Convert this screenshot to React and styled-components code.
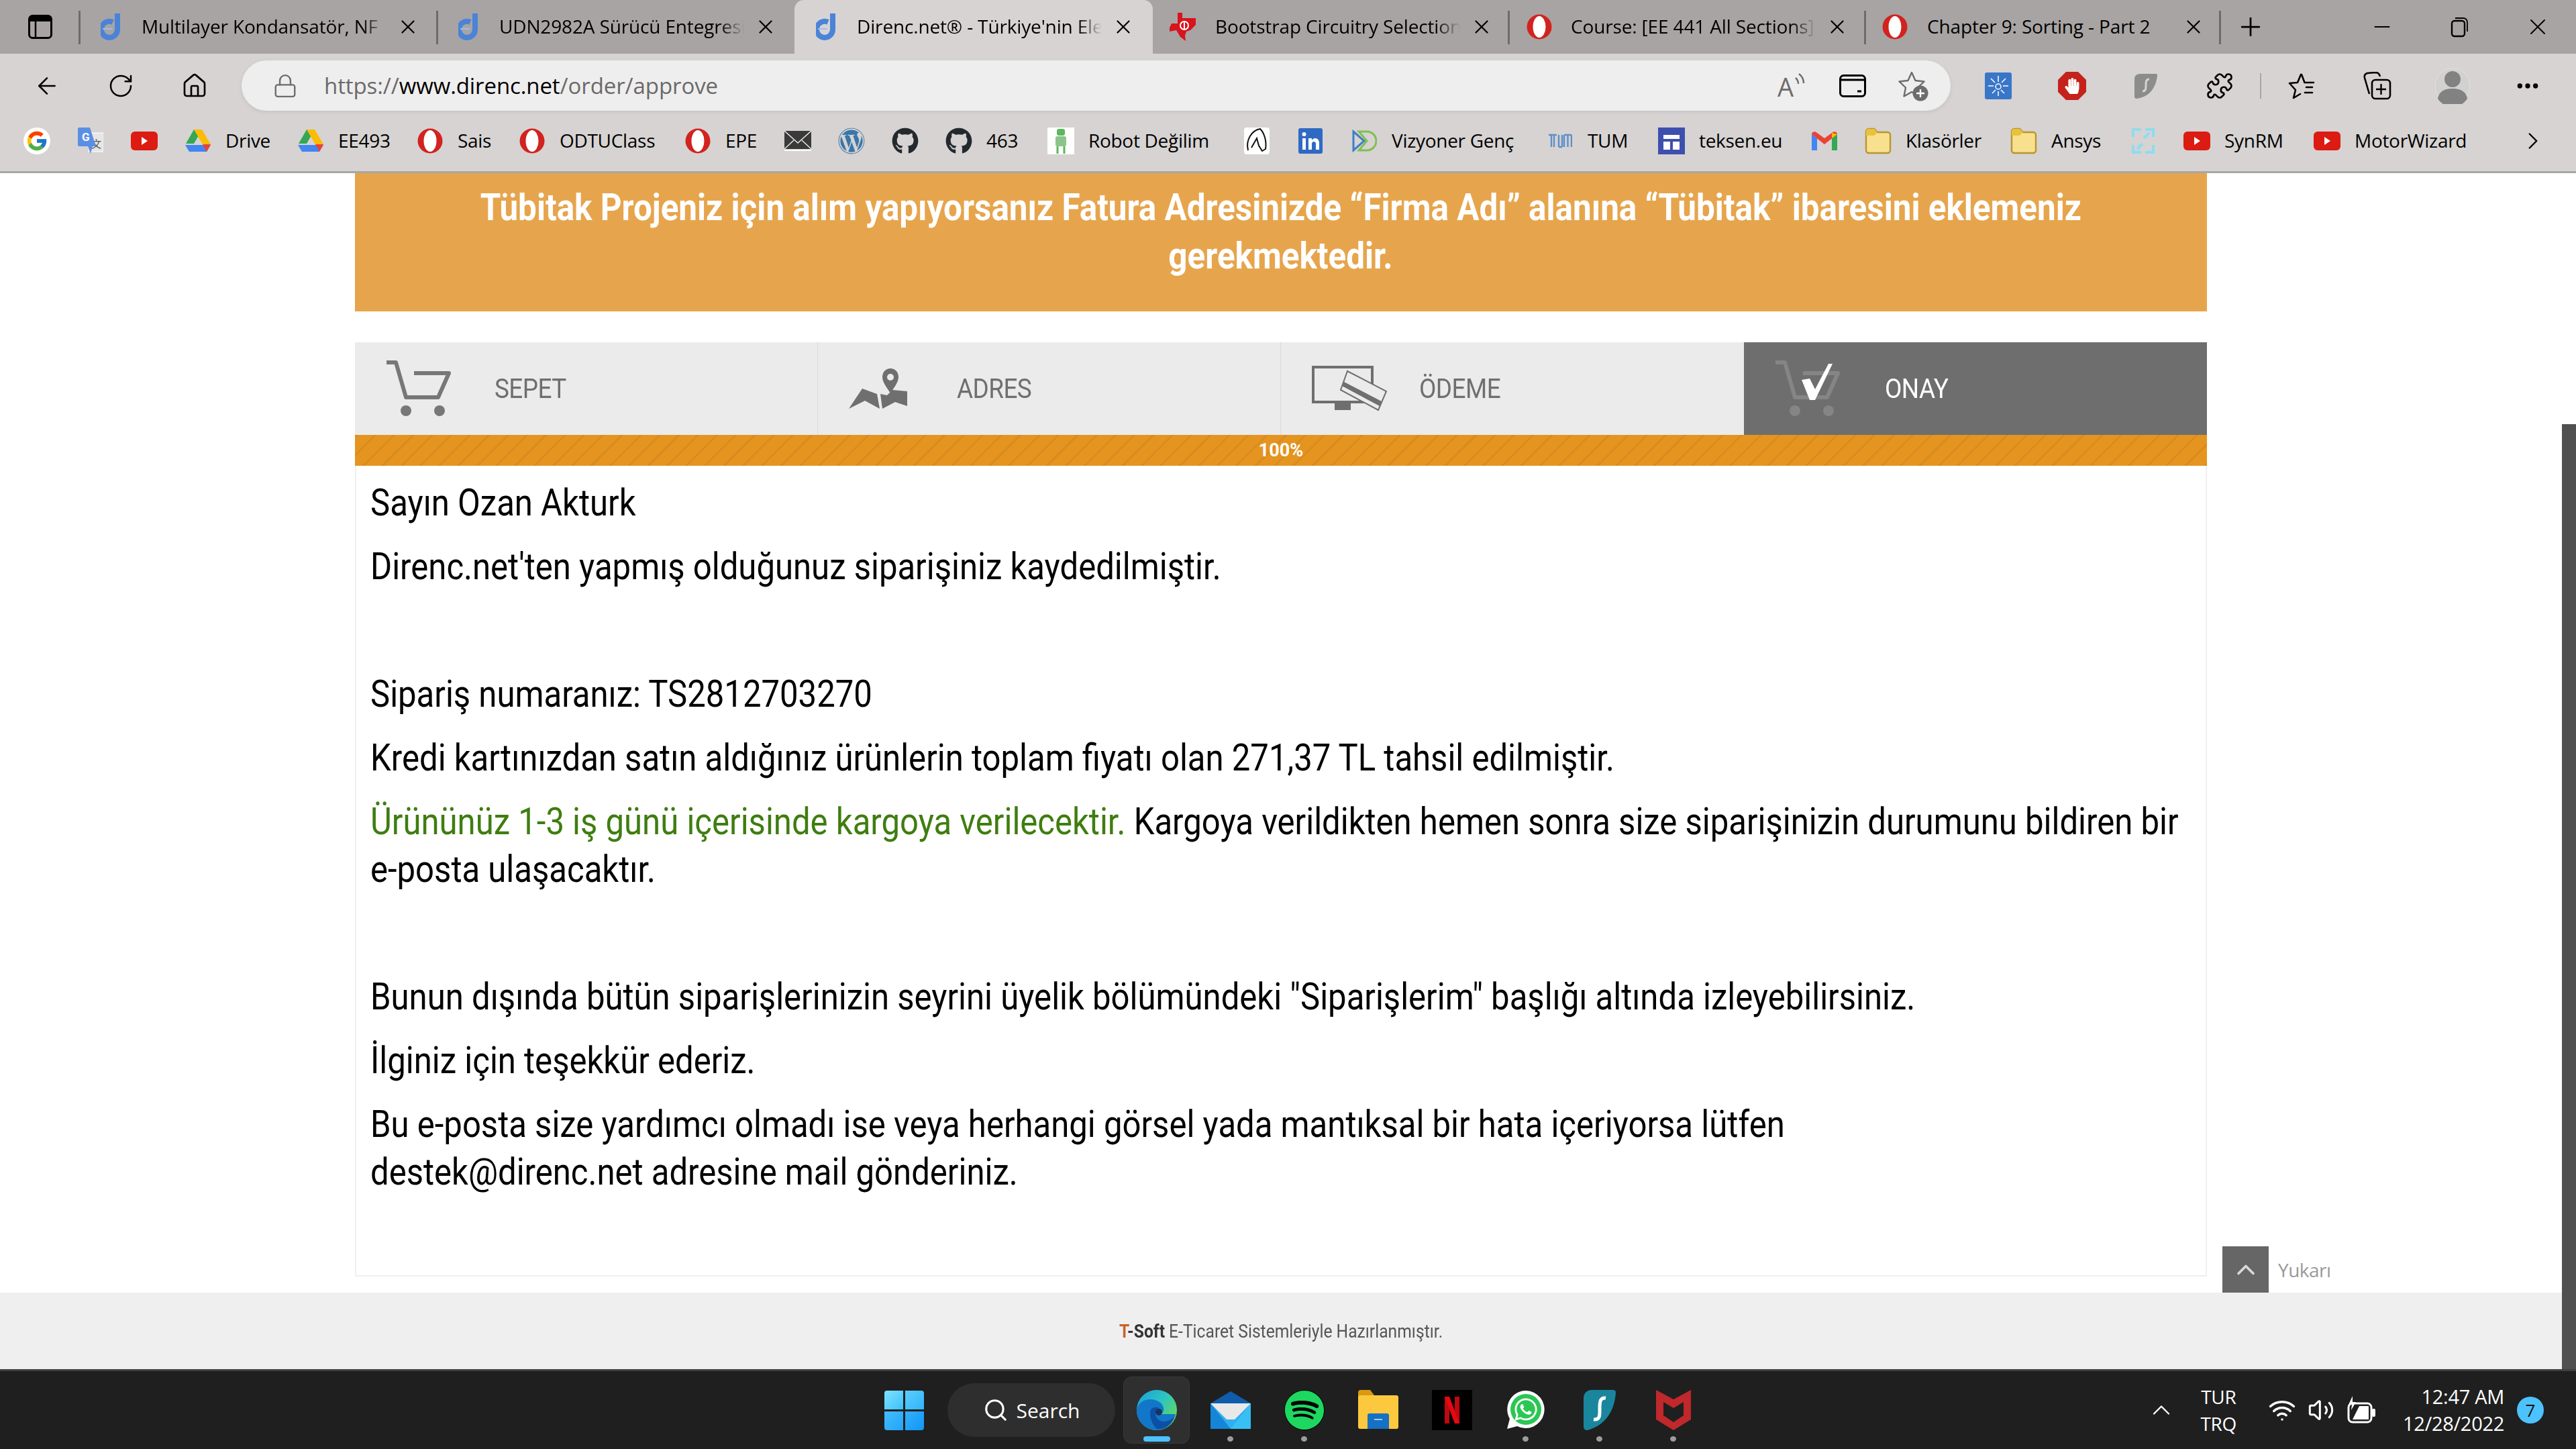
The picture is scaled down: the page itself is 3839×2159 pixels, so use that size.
import React from 'react';
import styled, { createGlobalStyle } from 'styled-components';
import { ArrowLeft, RotateCw, House, Lock, Plus, X, Minus, ChevronRight, ChevronUp, Puzzle, Wifi, Ellipsis, Search, Volume2 } from 'lucide-react';
import { FaGithub, FaWhatsapp, FaSpotify, FaWordpress, FaHandPaper } from 'react-icons/fa';
import { FcGoogle } from 'react-icons/fc';

const Global = createGlobalStyle`
  html, body { margin: 0; padding: 0; background: #fff; }
  * { box-sizing: border-box; }
`;

const UI = `"Open Sans", "Liberation Sans", sans-serif`;
const WEB = `Roboto, "Liberation Sans", sans-serif`;

const Screen = styled.div`
  width: 3839px; height: 2159px; display: flex; flex-direction: column; overflow: hidden;
  font-family: ${UI}; background: #fff;
`;

/* ---------- tab strip ---------- */
const TabStrip = styled.div`
  height: 80px; flex: none; background: #a8a4a3; display: flex; align-items: center; color: #000;
`;
const SideSlot = styled.div`
  width: 118px; flex: none; height: 100%; display: flex; align-items: center; padding-left: 42px;
`;
const Tab = styled.div`
  position: relative; width: ${p => p.$w}px; height: 80px; flex: none; display: flex; align-items: center;
  background: ${p => (p.$active ? '#d6d3d2' : 'transparent')};
  border-radius: ${p => (p.$active ? '14px 14px 0 0' : '0')};
  &::before {
    content: ''; display: ${p => (p.$divider ? 'block' : 'none')}; position: absolute; left: -1px; top: 16px;
    width: 3px; height: 50px; background: #6e6b6a;
  }
`;
const FavSlot = styled.div`
  width: 93px; flex: none; display: flex; align-items: center; height: 40px; padding-left: ${p => p.$pad}px;
`;
const TabTitle = styled.div`
  width: 365px; flex: none; font-size: 28px; letter-spacing: -0.15px; white-space: nowrap; overflow: hidden; line-height: 40px;
  margin-top: -2px;
  ${p => p.$fade && `mask-image: linear-gradient(to right, #000 90%, transparent 100%); -webkit-mask-image: linear-gradient(to right, #000 90%, transparent 100%);`}
`;
const CloseSlot = styled.div`
  width: 64px; flex: none; display: flex; justify-content: center; align-items: center;
`;
const PlusSlot = styled.div`
  position: relative; margin-left: 23px; width: 44px; height: 80px; display: flex; align-items: center; flex: none;
  &::before { content: ''; position: absolute; left: -25px; top: 16px; width: 3px; height: 50px; background: #6e6b6a; }
`;
const WinControls = styled.div`
  margin-left: auto; display: flex; gap: 76px; padding-right: 37px; align-items: center;
`;
const WinBtn = styled.div`
  width: 40px; display: flex; justify-content: center; align-items: center;
`;

/* ---------- toolbar ---------- */
const Toolbar = styled.div`
  height: 95px; flex: none; background: #d6d3d2; display: flex; align-items: center;
`;
const NavGroup = styled.div`
  display: flex; gap: 70px; padding-left: 50px; flex: none;
`;
const NavBtn = styled.div`
  width: 40px; height: 40px; display: flex; align-items: center; justify-content: center; color: #000;
`;
const AddressBar = styled.div`
  margin-left: 50px; width: 2547px; height: 75px; flex: none; border-radius: 38px; background: #efeeee;
  box-shadow: 0 2px 6px rgba(0,0,0,.08); display: flex; align-items: center; padding: 0 32px 0 45px;
`;
const Url = styled.div`
  margin-left: 38px; font-size: 33px; color: #6a6a6a; letter-spacing: -0.1px; white-space: nowrap;
`;
const UrlHost = styled.span` color: #000; `;
const BarIcons = styled.div`
  margin-left: auto; display: flex; gap: 48px; align-items: center;
`;
const ExtGroup = styled.div`
  margin-left: 16px; display: flex; align-items: center; flex: none;
`;
const ExtSlot = styled.div`
  width: ${p => p.$w}px; height: 60px; display: flex; align-items: center; justify-content: center; color: #000;
`;
const Sep = styled.div`
  width: 2px; height: 38px; background: #a9a6a5; margin: 0 5px;
`;

/* ---------- bookmarks ---------- */
const Bookmarks = styled.div`
  height: 83px; flex: none; background: #d6d3d2; border-bottom: 3px solid #a8a6a6; padding: 0 43px 10px 15px;
  display: flex; align-items: center;
`;
const BookItem = styled.div`
  display: flex; align-items: center; gap: 21px; padding: 0 20px; flex: none;
`;
const BookIcon = styled.div`
  width: 40px; height: 40px; flex: none; display: flex; align-items: center; justify-content: center;
`;
const BookLabel = styled.div`
  width: ${p => p.$w}px; font-size: 28px; letter-spacing: -0.3px; white-space: nowrap; color: #000; margin-top: -2px;
`;
const BookEnd = styled.div`
  margin-left: auto; display: flex;
`;
const GoogleMark = styled(FcGoogle)`
  background: #fff; border-radius: 50%; padding: 3px;
`;

/* ---------- page ---------- */
const Viewport = styled.div`
  flex: 1; min-height: 0; display: flex; position: relative;
`;
const Page = styled.div`
  flex: 1; min-width: 0; display: flex; flex-direction: column; position: relative;
`;
const Content = styled.div`
  flex: 1; width: 2760px; margin: 0 auto; font-family: ${WEB};
`;
const Banner = styled.div`
  height: 206px; background: #e6a54d; padding-top: 15px; text-align: center; color: #fff;
  font-size: 56px; font-weight: 700; line-height: 72px; overflow: hidden;
`;
const Squeeze = styled.span`
  display: inline-block; white-space: nowrap; transform: scaleX(${p => p.$k}); transform-origin: center;
`;
const Stepper = styled.div`
  margin-top: 46px; display: grid; grid-template-columns: repeat(4, 1fr); height: 138px;
`;
const Step = styled.div`
  display: flex; align-items: center; background: ${p => (p.$active ? '#6e6e6e' : '#ebebeb')};
  color: ${p => (p.$active ? '#fff' : '#6f6f6f')};
  border-right: 1px solid ${p => (p.$plain ? 'transparent' : '#dadada')};
  padding-left: 46px;
`;
const StepIcon = styled.div`
  width: ${p => p.$slot}px; flex: none; display: flex; align-items: center;
`;
const StepLabel = styled.div`
  font-size: 41px; letter-spacing: -0.6px; transform: scaleX(0.9); transform-origin: left center;
`;
const Progress = styled.div`
  height: 46px; display: flex; align-items: center; justify-content: center; color: #fff;
  font-size: 27px; font-weight: 700;
  background-color: #e5951f;
  background-image: repeating-linear-gradient(135deg, #d98c1f 0 3px, transparent 3px 20px);
`;
const Panel = styled.div`
  height: 1208px; border: 2px solid #efefef; border-top: 0; padding: 20px 21px 0;
  color: #000; font-size: 56px; line-height: 71px;
`;
const Para = styled.div`
  width: calc(100% / 0.876); transform: scaleX(0.876); transform-origin: left top; margin-bottom: 24px;
  min-height: 71px;
`;
const Green = styled.span` color: #3f7d10; `;

const ToTop = styled.div`
  position: absolute; left: 3312px; top: 1599px; display: flex; align-items: center; gap: 14px;
`;
const ToTopBtn = styled.div`
  width: 69px; height: 69px; background: #666; display: flex; align-items: center; justify-content: center; color: #d8d8d8;
`;
const ToTopText = styled.div`
  font-family: ${UI}; font-size: 28px; letter-spacing: -0.5px; color: #9a9a9a;
`;
const Footer = styled.div`
  height: 114px; flex: none; background: #efefef; display: flex; align-items: center; justify-content: center;
  font-family: ${WEB}; font-size: 28px; color: #555;
`;
const FootT = styled.b` color: #c8622a; `;
const FootSoft = styled.b` color: #333; `;
const ScrollTrack = styled.div`
  width: 21px; flex: none; background: #fff; padding-top: 374px; display: flex;
`;
const ScrollThumb = styled.div`
  flex: 1; background: #505050;
`;

/* ---------- taskbar ---------- */
const Taskbar = styled.div`
  height: 119px; flex: none; background: #1f1f1f; border-top: 3px solid #404040; display: flex; align-items: center;
  color: #fff; padding-left: 1318px;
`;
const StartIcon = styled.div`
  width: 59px; height: 59px; flex: none; display: grid; grid-template-columns: 1fr 1fr; gap: 3px;
`;
const Pane = styled.div`
  background: ${p => p.$bg}; border-radius: ${p => p.$r};
`;
const SearchPill = styled.div`
  margin-left: 35px; width: 250px; height: 80px; border-radius: 40px; background: #2e2e2e; flex: none;
  display: flex; align-items: center; justify-content: center; gap: 12px; font-size: 30px;
`;
const ActiveTile = styled.div`
  position: relative; margin-left: 12px; width: 99px; height: 100px; border-radius: 12px; background: #2f2f2f; flex: none;
  display: flex; align-items: center; justify-content: center; border: 1px solid #383838;
  &::after { content: ''; position: absolute; left: 29px; bottom: 2px; width: 40px; height: 8px; border-radius: 4px; background: #4cc2ff; }
`;
const TaskSlot = styled.div`
  position: relative; width: 110px; height: 100px; flex: none; display: flex; align-items: center; justify-content: center;
  &::after {
    content: ''; display: ${p => (p.$dot ? 'block' : 'none')}; position: absolute; left: 50px; bottom: 3px; width: 9px; height: 8px;
    border-radius: 50%; background: #9c9c9c;
  }
`;
const TaskApps = styled.div`
  display: flex; margin-left: 6px;
`;
const SpotifyMark = styled(FaSpotify)`
  background: #000; border-radius: 50%;
`;
const Tray = styled.div`
  margin-left: auto; display: flex; align-items: center; flex: none; padding-right: 48px;
`;
const TrayCol = styled.div`
  display: flex; flex-direction: column; text-align: ${p => p.$align}; font-size: ${p => p.$size}px; line-height: 40px; letter-spacing: -0.3px;
  margin-left: ${p => p.$ml}px;
`;
const TrayIcon = styled.div`
  display: flex; align-items: center; justify-content: center; width: 50px; margin-left: ${p => p.$ml}px;
`;
const Badge = styled.div`
  margin-left: 19px; width: 40px; height: 40px; border-radius: 50%; background: #4cc2ff; color: #111; font-size: 26px;
  display: flex; align-items: center; justify-content: center;
`;

/* ---------- drawn icons ---------- */
const DirencIcon = () => (
  <svg width="32" height="42" viewBox="0 0 32 42">
    <path d="M25 1v24a12 12 0 1 1-7-11" fill="none" stroke="#4a83d8" strokeWidth="8" />
    <path d="M3 24h14" stroke="#9dbdea" strokeWidth="2" />
  </svg>
);
const OperaIcon = ({ s = 38 }) => (
  <svg width={s} height={s} viewBox="0 0 38 38">
    <circle cx="19" cy="19" r="18.5" fill="#d2231f" />
    <ellipse cx="19" cy="19" rx="9.500" ry="16" fill="#fff" />
  </svg>
);
const TIIcon = () => (
  <svg width="40" height="42" viewBox="0 0 40 42">
    <path d="M12 0h7v8h20v10l-8 8-6 2-2 6 1 8-8-6-6-10-10 2v-6l3-6h9z" fill="#d8141d" />
    <circle cx="22" cy="19" r="6" fill="none" stroke="#fff" strokeWidth="2" />
    <path d="M22 12v14" stroke="#fff" strokeWidth="2" />
  </svg>
);
const SidebarIcon = () => (
  <svg width="36" height="36" viewBox="0 0 36 36">
    <rect x="1.5" y="1.5" width="33" height="33" rx="5" fill="none" stroke="#000" strokeWidth="3" />
    <path d="M2 10V6a4 4 0 0 1 4-4h24a4 4 0 0 1 4 4v4z" fill="#000" />
    <path d="M11 10v24" stroke="#000" strokeWidth="2.5" />
  </svg>
);
const RestoreIcon = () => (
  <svg width="28" height="32" viewBox="0 0 28 32">
    <rect x="2" y="7" width="19" height="23" rx="4" fill="none" stroke="#000" strokeWidth="2.4" />
    <path d="M7 3h12a6 6 0 0 1 6 6v14" fill="none" stroke="#000" strokeWidth="1.8" />
  </svg>
);
const ReadAloudSvg = styled.svg` overflow: visible; `;
const ReadAloud = () => (
  <ReadAloudSvg width="44" height="44" viewBox="0 0 44 44">
    <text x="0" y="38" fontFamily="Open Sans" fontSize="38" fill="#6c6c6c">A</text>
    <path d="M27 10a12 12 0 0 1 4 9M32 4a18 18 0 0 1 7 14" fill="none" stroke="#6c6c6c" strokeWidth="2.4" />
  </ReadAloudSvg>
);
const CardIcon = () => (
  <svg width="40" height="34" viewBox="0 0 40 34">
    <rect x="1.5" y="1.5" width="37" height="31" rx="5" fill="none" stroke="#000" strokeWidth="3" />
    <path d="M2 8h36" stroke="#000" strokeWidth="3" />
    <path d="M27 25h6" stroke="#000" strokeWidth="3" />
  </svg>
);
const StarPlus = () => (
  <svg width="46" height="46" viewBox="0 0 46 46">
    <path d="M20 3l5.5 12 13 1.5-9.5 9 2.5 13-11.5-6.5L8.500 38.500l2.500-13-9.500-9 13-1.500z" fill="none" stroke="#6c6c6c" strokeWidth="2.4" strokeLinejoin="round" />
    <circle cx="33" cy="34" r="11.500" fill="#6c6c6c" />
    <path d="M33 28v12M27 34h12" stroke="#fff" strokeWidth="2.400" />
  </svg>
);
const SunBox = () => (
  <svg width="40" height="40" viewBox="0 0 40 40">
    <rect width="40" height="40" rx="3" fill="#3a76c8" />
    <circle cx="20" cy="21" r="4" fill="none" stroke="#fff" strokeWidth="1.500" />
    <path d="M20 5v9M20 28v7M5 20h8M27 20h8M9 9l6 6M31 9l-6 6M11 31l5-5M29 31l-5-5" stroke="#fff" strokeWidth="1.500" />
  </svg>
);
const StopHand = () => (
  <svg width="42" height="42" viewBox="0 0 42 42">
    <path d="M12 0h18l12 12v18L30 42H12L0 30V12z" fill="#c4221a" />
    <foreignObject x="9" y="9" width="24" height="24"><FaHandPaper size={24} color="#fff" /></foreignObject>
  </svg>
);
const SharkGrey = () => (
  <svg width="34" height="38" viewBox="0 0 34 38">
    <path d="M8 1h24c2 0 2 1 2 3-2 14-8 30-30 34-3 0-4-1-4-3V8c0-4 4-7 8-7z" fill="#8c8c8c" />
    <path d="M22 9c-5 0-5 4-5 9s0 9-5 9" fill="none" stroke="#d6d3d2" strokeWidth="3" />
  </svg>
);
const FavList = () => (
  <svg width="42" height="40" viewBox="0 0 42 40">
    <path d="M20 3l4.500 12H38M27 22H36M25 30H36M19 3L14 15 2 16l9 10-3 12 10-6" fill="none" stroke="#000" strokeWidth="2.600" strokeLinejoin="round" strokeLinecap="round" />
  </svg>
);
const Collections = () => (
  <svg width="42" height="42" viewBox="0 0 42 42">
    <path d="M9 33L2 9c-1-4 1-6 4-7l12-1c4 0 6 2 7 6" fill="none" stroke="#000" strokeWidth="2.600" />
    <rect x="13" y="12" width="27" height="28" rx="5" fill="none" stroke="#000" strokeWidth="2.600" />
    <path d="M26.500 18v16M19 26h15" stroke="#000" strokeWidth="2.400" />
  </svg>
);
const Profile = () => (
  <svg width="54" height="54" viewBox="0 0 54 54">
    <circle cx="27" cy="27" r="26" fill="#d3d1d0" stroke="#e3e1e0" strokeWidth="1" />
    <circle cx="27" cy="17" r="12" fill="#828282" />
    <path d="M5 46c2-12 12-15 22-15s20 3 22 15a26 26 0 0 1-44 0z" fill="#828282" />
  </svg>
);
const YouTube = () => (
  <svg width="40" height="28" viewBox="0 0 40 28">
    <rect width="40" height="28" rx="6" fill="#dc1b12" />
    <path d="M16 8l9 6-9 6z" fill="#fff" />
  </svg>
);
const Translate = () => (
  <svg width="38" height="40" viewBox="0 0 38 40">
    <rect x="16" y="8" width="22" height="28" fill="#e6e6e6" stroke="#fff" />
    <text x="20" y="30" fontSize="15" fill="#555" fontFamily="Noto Sans CJK SC">文</text>
    <path d="M2 0h16l9 28H22l-3 11-4-11H2a2 2 0 0 1-2-2V2a2 2 0 0 1 2-2z" fill="#5b8fe6" />
    <text x="6" y="20" fontSize="17" fill="#fff" fontWeight="700" fontFamily="Roboto">G</text>
  </svg>
);
const Drive = () => (
  <svg width="38" height="34" viewBox="0 0 38 34">
    <path d="M13 0h12L13 21H1z" fill="#34a853" />
    <path d="M25 0l13 22H26L13 0z" fill="#fbbc04" />
    <path d="M6 33L0 23h38l-6 10z" fill="#4285f4" />
    <path d="M26 22h12l-6 11z" fill="#ea4335" />
  </svg>
);
const MailMono = () => (
  <svg width="40" height="30" viewBox="0 0 40 30">
    <rect width="40" height="27" fill="#3a3a3a" />
    <path d="M0 0l20 18L40 0M0 27l14-13M40 27L26 14" fill="none" stroke="#e8e8e8" strokeWidth="1.500" />
    <rect y="28" width="40" height="2" fill="#fff" />
  </svg>
);
const RobotIcon = () => (
  <svg width="40" height="40" viewBox="0 0 40 40">
    <rect width="40" height="40" fill="#fff" />
    <rect x="14" y="2" width="12" height="10" rx="3" fill="#5cb85c" />
    <rect x="12" y="13" width="16" height="15" rx="3" fill="#8cc48c" />
    <path d="M15 28v11M25 28v11" stroke="#5cb85c" strokeWidth="3" />
  </svg>
);
const HorseIcon = () => (
  <svg width="38" height="40" viewBox="0 0 38 40">
    <rect width="38" height="40" rx="4" fill="#fff" />
    <path d="M6 34C2 18 12 4 24 2c6 6 10 18 8 30l-5 3-5-8-3-11-8 14" fill="none" stroke="#111" strokeWidth="2" />
  </svg>
);
const LinkedIn = () => (
  <svg width="36" height="38" viewBox="0 0 36 38">
    <rect width="36" height="38" rx="3" fill="#2e6ac2" />
    <rect x="6" y="15" width="5" height="17" fill="#fff" />
    <circle cx="8.500" cy="9" r="3" fill="#fff" />
    <path d="M15 15h5v3c3-5 11-4 11 4v10h-5v-9c0-4-6-4-6 0v9h-5z" fill="#fff" />
  </svg>
);
const Vizyoner = () => (
  <svg width="38" height="34" viewBox="0 0 38 34">
    <path d="M3 3l16 14L3 31z" fill="none" stroke="#3f7fc4" strokeWidth="3" />
    <path d="M11 3h12a14 14 0 0 1 0 28H11l12-14z" fill="none" stroke="#7fc04f" strokeWidth="3" />
  </svg>
);
const TumLogo = () => (
  <svg width="36" height="22" viewBox="0 0 36 22">
    <path d="M1 2h12M5 2v18M9 2v18M16 2v18M21 2v18M16 20h5M24 2h11M24 2v18M29.500 2v18M35 2v18" fill="none" stroke="#5e8fc8" strokeWidth="2.400" />
  </svg>
);
const Teksen = () => (
  <svg width="40" height="40" viewBox="0 0 40 40">
    <rect width="40" height="40" fill="#3f4fae" />
    <rect x="8" y="11" width="24" height="6" fill="#fff" />
    <rect x="8" y="21" width="10" height="12" fill="#fff" />
    <rect x="22" y="21" width="10" height="12" fill="#fff" />
  </svg>
);
const Gmail = () => (
  <svg width="38" height="28" viewBox="0 0 38 28">
    <path d="M0 4v24h8V10z" fill="#4285f4" />
    <path d="M30 10v18h8V4z" fill="#34a853" />
    <path d="M0 4l19 15L38 4c0-4-5-5-8-2L19 10 8 2C5-1 0 0 0 4z" fill="#ea4335" />
    <path d="M30 2l8 2v0l-8 6z" fill="#fbbc04" />
  </svg>
);
const Folder = () => (
  <svg width="40" height="40" viewBox="0 0 40 40">
    <path d="M2 6a4 4 0 0 1 4-4h8l5 5h15a4 4 0 0 1 4 4v23a4 4 0 0 1-4 4H6a4 4 0 0 1-4-4z" fill="#f8e08e" stroke="#b8962e" strokeWidth="2.400" />
    <path d="M2 12V6a4 4 0 0 1 4-4h8l5 5-5 5z" fill="#e8c23e" />
  </svg>
);
const CyanExpand = () => (
  <svg width="34" height="40" viewBox="0 0 34 40">
    <path d="M2 14V3h12M32 26v11H20M20 3h12v11M14 37H2V26M8 32l8-8M26 8l-8 8" fill="none" stroke="#8fdcf0" strokeWidth="4" />
  </svg>
);
const CartIcon = ({ c = '#777' }) => (
  <svg width="97" height="84" viewBox="0 0 97 84">
    <path d="M1 3h14l15 52h48l16-36H42" fill="none" stroke={c} strokeWidth="6" strokeLinejoin="round" />
    <circle cx="30" cy="75" r="8" fill={c} />
    <circle cx="80" cy="75" r="8" fill={c} />
  </svg>
);
const PinIcon = () => (
  <svg width="88" height="60" viewBox="0 0 88 60">
    <path d="M0 60l20-30 22 8 4 22-22-12z" fill="#6f6f6f" />
    <path d="M50 60l-3-22 10 2 8-8 22 2v22l-18-6z" fill="#6f6f6f" />
    <path d="M62 0a12 12 0 0 1 12 13c0 8-8 17-12 24-4-7-12-16-12-24A12 12 0 0 1 62 0z" fill="#6f6f6f" />
    <circle cx="62" cy="13" r="5" fill="#ebebeb" />
  </svg>
);
const PayIcon = () => (
  <svg width="112" height="68" viewBox="0 0 112 68">
    <rect x="2" y="2" width="88" height="52" fill="none" stroke="#6f6f6f" strokeWidth="4" />
    <rect x="34" y="54" width="24" height="12" fill="#6f6f6f" />
    <path d="M53 8l58 30-12 28-56-30z" fill="#ebebeb" stroke="#6f6f6f" strokeWidth="2" />
    <path d="M48 24l56 29-3 7-56-30z" fill="#6f6f6f" />
  </svg>
);
const ApproveWrap = styled.div`
  position: relative; width: 97px; height: 84px;
`;
const CheckOverlay = styled.svg`
  position: absolute; left: 38px; top: 5px;
`;
const ApproveIcon = () => (
  <ApproveWrap>
    <CartIcon c="#858585" />
    <CheckOverlay width="50" height="54" viewBox="0 0 50 54">
      <path d="M2 24l12-2 8 16L42 0h6L22 54h-8z" fill="#fff" />
    </CheckOverlay>
  </ApproveWrap>
);
const Edge = () => (
  <svg width="60" height="60" viewBox="0 0 60 60">
    <defs>
      <linearGradient id="eg" x1="0" y1="0" x2="1" y2=".7">
        <stop offset="0" stopColor="#1aa0e0" /><stop offset=".55" stopColor="#2cc5c0" /><stop offset="1" stopColor="#6ad85a" />
      </linearGradient>
    </defs>
    <circle cx="30" cy="30" r="30" fill="url(#eg)" />
    <path d="M0 30C2 14 22 10 34 18c8 6 8 15 2 18l22 0C54 52 42 60 30 60 12 60 0 46 0 30z" fill="#1277c8" />
    <path d="M20 34c0-8 8-10 14-7-6 1-8 7-4 15 6 8 18 6 26-2-4 12-16 20-26 18-6-6-10-14-10-24z" fill="#0d4fa5" />
    <circle cx="33" cy="33" r="5" fill="#17335c" />
  </svg>
);
const MailApp = () => (
  <svg width="60" height="56" viewBox="0 0 60 56">
    <path d="M0 18L30 0l30 18v2H0z" fill="#0f5cab" />
    <rect y="18" width="60" height="38" fill="#2fb0ee" />
    <path d="M0 18h60L36 42H24z" fill="#e8e8e8" />
    <path d="M0 56V18l30 38z" fill="#1585d8" />
    <path d="M60 56V18L30 56z" fill="#38c0f4" />
  </svg>
);
const FolderApp = () => (
  <svg width="60" height="60" viewBox="0 0 60 60">
    <path d="M0 4a4 4 0 0 1 4-4h14l6 8v4H0z" fill="#d99a10" />
    <rect y="8" width="60" height="50" rx="3" fill="#fcc93e" />
    <path d="M14 38a3 3 0 0 1 3-3h26a3 3 0 0 1 3 3v20H14z" fill="#1670c4" />
    <path d="M24 44h12" stroke="#9cd0f0" strokeWidth="2" />
  </svg>
);
const Netflix = () => (
  <svg width="60" height="60" viewBox="0 0 60 60">
    <rect width="60" height="60" fill="#000" />
    <path d="M19 10h7v40h-7zM34 10h7v40h-7z" fill="#c10710" />
    <path d="M19 10h7l15 40h-7z" fill="#e50914" />
  </svg>
);
const WhatsApp = () => (
  <svg width="60" height="60" viewBox="0 0 60 60">
    <path d="M30 1a28 28 0 0 0-24 42L2 58l15-4A28 28 0 1 0 30 1z" fill="#fff" />
    <circle cx="30" cy="29" r="23" fill="#2bc653" />
    <foreignObject x="11" y="10" width="38" height="38"><FaWhatsapp size={38} color="#fff" /></foreignObject>
  </svg>
);
const Surfshark = () => (
  <svg width="48" height="60" viewBox="0 0 48 60">
    <path d="M12 0h32c3 0 4 2 4 4-2 26-14 48-42 56-4 0-6-2-6-5V12C0 5 5 0 12 0z" fill="#1a869e" />
    <path d="M33 12c-9-1-9 7-9 16s1 17-9 16" fill="none" stroke="#fff" strokeWidth="5" />
  </svg>
);
const McAfee = () => (
  <svg width="52" height="60" viewBox="0 0 52 60">
    <path d="M0 0l26 14L52 0v44L26 60 0 44z" fill="#c0282b" />
    <path d="M11 18l15 9 15-9v20L26 48 11 38z" fill="#1f1f1f" />
  </svg>
);
const BatteryIcon = () => (
  <svg width="42" height="44" viewBox="0 0 42 44">
    <rect x="2" y="12" width="34" height="28" rx="6" fill="none" stroke="#fff" strokeWidth="3" />
    <path d="M8 36l10-20h14v20z" fill="#fff" />
    <rect x="37" y="20" width="5" height="12" rx="2" fill="#fff" />
    <path d="M8 1L2 14h5l-1 8 7-12H8z" fill="#fff" />
  </svg>
);

/* ---------- data ---------- */
const tabs = [
  { w: 533, pad: 32, title: 'Multilayer Kondansatör, NF', fav: <DirencIcon />, divider: true, fade: true },
  { w: 533, pad: 32, title: 'UDN2982A Sürücü Entegresi', fav: <DirencIcon />, divider: true, fade: true },
  { w: 534, pad: 32, title: "Direnc.net® - Türkiye'nin Elektronik", fav: <DirencIcon />, active: true, fade: true },
  { w: 530, pad: 25, title: 'Bootstrap Circuitry Selection', fav: <TIIcon /> , fade: true },
  { w: 531, pad: 27, title: 'Course: [EE 441 All Sections]', fav: <OperaIcon />, divider: true, fade: true },
  { w: 530, pad: 26, title: 'Chapter 9: Sorting - Part 2', fav: <OperaIcon />, divider: true },
];

const gh = <FaGithub size={40} color="#24292e" />;
const books = [
  { icon: <GoogleMark size={40} /> },
  { icon: <Translate /> },
  { icon: <YouTube /> },
  { icon: <Drive />, label: 'Drive', w: 67 },
  { icon: <Drive />, label: 'EE493', w: 77 },
  { icon: <OperaIcon />, label: 'Sais', w: 51 },
  { icon: <OperaIcon />, label: 'ODTUClass', w: 146 },
  { icon: <OperaIcon />, label: 'EPE', w: 48 },
  { icon: <MailMono /> },
  { icon: <FaWordpress size={40} color="#3a76a8" /> },
  { icon: gh },
  { icon: gh, label: '463', w: 51 },
  { icon: <RobotIcon />, label: 'Robot Değilim', w: 191 },
  { icon: <HorseIcon /> },
  { icon: <LinkedIn /> },
  { icon: <Vizyoner />, label: 'Vizyoner Genç', w: 191 },
  { icon: <TumLogo />, label: 'TUM', w: 65 },
  { icon: <Teksen />, label: 'teksen.eu', w: 127 },
  { icon: <Gmail /> },
  { icon: <Folder />, label: 'Klasörler', w: 116 },
  { icon: <Folder />, label: 'Ansys', w: 77 },
  { icon: <CyanExpand /> },
  { icon: <YouTube />, label: 'SynRM', w: 93 },
  { icon: <YouTube />, label: 'MotorWizard', w: 176 },
];

const steps = [
  { label: 'SEPET', icon: <CartIcon />, slot: 162 },
  { label: 'ADRES', icon: <PinIcon />, slot: 161 },
  { label: 'ÖDEME', icon: <PayIcon />, slot: 160 },
  { label: 'ONAY', icon: <ApproveIcon />, slot: 164, active: true },
];

const apps = [
  { icon: <MailApp />, dot: true },
  { icon: <SpotifyMark size={60} color="#1ed760" />, dot: true },
  { icon: <FolderApp /> },
  { icon: <Netflix /> },
  { icon: <WhatsApp />, dot: true },
  { icon: <Surfshark />, dot: true },
  { icon: <McAfee />, dot: true },
];

export default function App() {
  return (
    <Screen>
      <Global />
      <TabStrip>
        <SideSlot><SidebarIcon /></SideSlot>
        {tabs.map(t => (
          <Tab key={t.title} $w={t.w} $active={t.active} $divider={t.divider}>
            <FavSlot $pad={t.pad}>{t.fav}</FavSlot>
            <TabTitle $fade={t.fade}>{t.title}</TabTitle>
            <CloseSlot><X size={34} strokeWidth={1.6} /></CloseSlot>
          </Tab>
        ))}
        <PlusSlot><Plus size={44} strokeWidth={1.5} /></PlusSlot>
        <WinControls>
          <WinBtn><Minus size={36} strokeWidth={1.4} /></WinBtn>
          <WinBtn><RestoreIcon /></WinBtn>
          <WinBtn><X size={42} strokeWidth={1.2} /></WinBtn>
        </WinControls>
      </TabStrip>

      <Toolbar>
        <NavGroup>
          <NavBtn><ArrowLeft size={46} strokeWidth={1.5} /></NavBtn>
          <NavBtn><RotateCw size={46} strokeWidth={1.5} /></NavBtn>
          <NavBtn><House size={44} strokeWidth={1.6} /></NavBtn>
        </NavGroup>
        <AddressBar>
          <NavBtn><Lock size={38} strokeWidth={1.5} color="#6c6c6c" /></NavBtn>
          <Url>https://<UrlHost>www.direnc.net</UrlHost>/order/approve</Url>
          <BarIcons>
            <ReadAloud />
            <CardIcon />
            <StarPlus />
          </BarIcons>
        </AddressBar>
        <ExtGroup>
          <ExtSlot $w={110}><SunBox /></ExtSlot>
          <ExtSlot $w={110}><StopHand /></ExtSlot>
          <ExtSlot $w={110}><SharkGrey /></ExtSlot>
          <ExtSlot $w={110}><Puzzle size={42} strokeWidth={1.5} /></ExtSlot>
          <Sep />
          <ExtSlot $w={112}><FavList /></ExtSlot>
          <ExtSlot $w={112}><Collections /></ExtSlot>
          <ExtSlot $w={112}><Profile /></ExtSlot>
          <ExtSlot $w={112}><Ellipsis size={40} strokeWidth={2.4} /></ExtSlot>
        </ExtGroup>
      </Toolbar>

      <Bookmarks>
        {books.map((b, i) => (
          <BookItem key={i}>
            <BookIcon>{b.icon}</BookIcon>
            {b.label && <BookLabel $w={b.w}>{b.label}</BookLabel>}
          </BookItem>
        ))}
        <BookEnd><ChevronRight size={42} strokeWidth={1.4} /></BookEnd>
      </Bookmarks>

      <Viewport>
        <Page>
          <Content>
            <Banner>
              <Squeeze $k={0.882}>Tübitak Projeniz için alım yapıyorsanız Fatura Adresinizde “Firma Adı” alanına “Tübitak” ibaresini eklemeniz</Squeeze>
              <br />
              <Squeeze $k={0.882}>gerekmektedir.</Squeeze>
            </Banner>
            <Stepper>
              {steps.map((s, i) => (
                <Step key={s.label} $active={s.active} $plain={i >= 2}>
                  <StepIcon $slot={s.slot}>{s.icon}</StepIcon>
                  <StepLabel>{s.label}</StepLabel>
                </Step>
              ))}
            </Stepper>
            <Progress>100%</Progress>
            <Panel>
              <Para>Sayın Ozan Akturk</Para>
              <Para>Direnc.net'ten yapmış olduğunuz siparişiniz kaydedilmiştir.</Para>
              <Para />
              <Para>Sipariş numaranız: TS2812703270</Para>
              <Para>Kredi kartınızdan satın aldığınız ürünlerin toplam fiyatı olan 271,37 TL tahsil edilmiştir.</Para>
              <Para><Green>Ürününüz 1-3 iş günü içerisinde kargoya verilecektir.</Green> Kargoya verildikten hemen sonra size siparişinizin durumunu bildiren bir e-posta ulaşacaktır.</Para>
              <Para />
              <Para>Bunun dışında bütün siparişlerinizin seyrini üyelik bölümündeki "Siparişlerim" başlığı altında izleyebilirsiniz.</Para>
              <Para>İlginiz için teşekkür ederiz.</Para>
              <Para>Bu e-posta size yardımcı olmadı ise veya herhangi görsel yada mantıksal bir hata içeriyorsa lütfen<br />destek@direnc.net adresine mail gönderiniz.</Para>
            </Panel>
          </Content>
          <Footer>
            <Squeeze $k={0.88}><FootT>T</FootT><FootSoft>-Soft</FootSoft> E-Ticaret Sistemleriyle Hazırlanmıştır.</Squeeze>
          </Footer>
          <ToTop>
            <ToTopBtn><ChevronUp size={44} strokeWidth={2} /></ToTopBtn>
            <ToTopText>Yukarı</ToTopText>
          </ToTop>
        </Page>
        <ScrollTrack><ScrollThumb /></ScrollTrack>
      </Viewport>

      <Taskbar>
        <StartIcon>
          <Pane $bg="linear-gradient(135deg,#7fe3ff,#3cc0fb)" $r="4px 0 0 0" />
          <Pane $bg="linear-gradient(135deg,#5ccdfd,#30b4fa)" $r="0 4px 0 0" />
          <Pane $bg="linear-gradient(135deg,#43bdfb,#22a4f8)" $r="0 0 0 4px" />
          <Pane $bg="linear-gradient(135deg,#34b0fb,#1196f5)" $r="0 0 4px 0" />
        </StartIcon>
        <SearchPill>
          <Search size={38} strokeWidth={2} />
          Search
        </SearchPill>
        <ActiveTile><Edge /></ActiveTile>
        <TaskApps>
          {apps.map((a, i) => (
            <TaskSlot key={i} $dot={a.dot}>{a.icon}</TaskSlot>
          ))}
        </TaskApps>
        <Tray>
          <ChevronUp size={44} strokeWidth={1.3} />
          <TrayCol $align="center" $size={28} $ml={36}><span>TUR</span><span>TRQ</span></TrayCol>
          <TrayIcon $ml={43}><Wifi size={42} strokeWidth={2} /></TrayIcon>
          <TrayIcon $ml={8}><Volume2 size={40} strokeWidth={1.8} /></TrayIcon>
          <TrayIcon $ml={10}><BatteryIcon /></TrayIcon>
          <TrayCol $align="right" $size={29} $ml={37}><span>12:47 AM</span><span>12/28/2022</span></TrayCol>
          <Badge>7</Badge>
        </Tray>
      </Taskbar>
    </Screen>
  );
}
